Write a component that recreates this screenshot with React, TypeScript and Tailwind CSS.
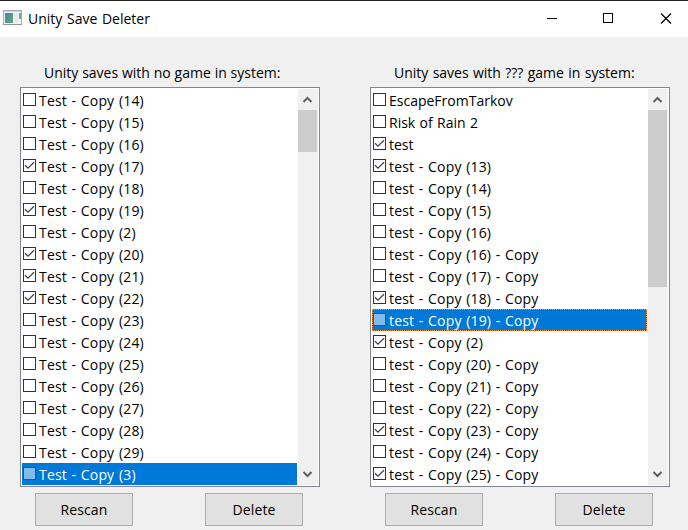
type Item = { name: string; checked?: boolean; selected?: boolean; focused?: boolean };

const noGame: Item[] = [
  { name: 'Test - Copy (14)' },
  { name: 'Test - Copy (15)' },
  { name: 'Test - Copy (16)' },
  { name: 'Test - Copy (17)', checked: true },
  { name: 'Test - Copy (18)' },
  { name: 'Test - Copy (19)', checked: true },
  { name: 'Test - Copy (2)' },
  { name: 'Test - Copy (20)', checked: true },
  { name: 'Test - Copy (21)', checked: true },
  { name: 'Test - Copy (22)', checked: true },
  { name: 'Test - Copy (23)' },
  { name: 'Test - Copy (24)' },
  { name: 'Test - Copy (25)' },
  { name: 'Test - Copy (26)' },
  { name: 'Test - Copy (27)' },
  { name: 'Test - Copy (28)' },
  { name: 'Test - Copy (29)' },
  { name: 'Test - Copy (3)', selected: true },
];

const unknownGame: Item[] = [
  { name: 'EscapeFromTarkov' },
  { name: 'Risk of Rain 2' },
  { name: 'test', checked: true },
  { name: 'test - Copy (13)', checked: true },
  { name: 'test - Copy (14)' },
  { name: 'test - Copy (15)' },
  { name: 'test - Copy (16)' },
  { name: 'test - Copy (16) - Copy' },
  { name: 'test - Copy (17) - Copy' },
  { name: 'test - Copy (18) - Copy', checked: true },
  { name: 'test - Copy (19) - Copy', selected: true, focused: true },
  { name: 'test - Copy (2)', checked: true },
  { name: 'test - Copy (20) - Copy' },
  { name: 'test - Copy (21) - Copy' },
  { name: 'test - Copy (22) - Copy' },
  { name: 'test - Copy (23) - Copy', checked: true },
  { name: 'test - Copy (24) - Copy' },
  { name: 'test - Copy (25) - Copy', checked: true },
];

function Checkbox({ item }: { item: Item }) {
  const look = item.selected ? 'border-[#1d5a92] bg-[#80bbeb]' : 'border-[#333] bg-white';
  return (
    <span className={`mt-1 block size-[13px] shrink-0 border ${look}`}>
      {item.checked && (
        <svg width="11" height="11" viewBox="0 0 11 11" fill="none" stroke="#444" strokeWidth="1.3">
          <path d="M1 5.2 4 8.2 10 2.2" />
        </svg>
      )}
    </span>
  );
}

function Row({ item }: { item: Item }) {
  const spacing = item.name.includes(' - ') ? 'tracking-[0.17px] [word-spacing:0.8px]' : '[word-spacing:0.7px]';
  return (
    <li
      className={`flex h-[22px] border border-dotted ${item.selected ? 'bg-[#0078d7] text-white' : ''} ${
        item.focused ? 'border-[#ff8728]' : 'border-transparent'
      }`}
    >
      <span className="-mt-px flex">
        <Checkbox item={item} />
      </span>
      <span className={`ml-[3px] whitespace-pre leading-[21px] ${spacing}`}>{item.name}</span>
    </li>
  );
}

function Arrow({ down }: { down?: boolean }) {
  return (
    <svg width="20" height="21" viewBox="0 0 20 21" fill="none" stroke="#606060" strokeWidth="2" className="shrink-0">
      <path d={down ? 'M5.5 8 9.5 12 13.5 8' : 'M5.5 13 9.5 9 13.5 13'} />
    </svg>
  );
}

function Panel({ title, titleClass, items, thumbClass }: { title: string; titleClass: string; items: Item[]; thumbClass: string }) {
  return (
    <section className="w-[300px]">
      <h2 className={`h-[50px] whitespace-pre pt-[25px] pl-6 leading-[22px] ${titleClass}`}>{title}</h2>
      <div className="flex h-[400px] justify-between border border-[#828790] bg-white p-px">
        <ul className="w-[275px]">
          {items.map((item) => (
            <Row key={item.name} item={item} />
          ))}
        </ul>
        <div className="flex w-5 flex-col bg-[#f0f0f0]">
          <Arrow />
          <div className={`w-[19px] bg-[#cdcdcd] ${thumbClass}`} />
          <div className="grow" />
          <Arrow down />
        </div>
      </div>
      <div className="mt-1.5 flex gap-[72px] pl-[15px] tracking-[0.1px]">
        <button className="h-[33px] w-[98px] border border-[#adadad] bg-[#e1e1e1]">Rescan</button>
        <button className="h-[33px] w-[98px] border border-[#adadad] bg-[#e1e1e1]">Delete</button>
      </div>
    </section>
  );
}

function AppIcon() {
  return (
    <svg width="19" height="16" viewBox="0 0 19 16" className="-mt-0.5">
      <defs>
        <linearGradient id="screen" x1="0" y1="0" x2="1" y2="1">
          <stop offset="0" stopColor="#477fa5" />
          <stop offset="1" stopColor="#63ad72" />
        </linearGradient>
      </defs>
      <rect x="0.5" y="0.5" width="18" height="14" fill="#f4f6f8" stroke="#a5abb2" />
      <path d="M1 1.5H18" stroke="#d0d4da" />
      <rect x="2" y="3" width="8" height="10" fill="url(#screen)" />
      <rect x="11" y="3" width="4" height="10" fill="#e5eaf0" />
      <rect x="16" y="3" width="2" height="6" fill="#65a992" />
      <path d="M0 14.5H19" stroke="#8f959c" />
    </svg>
  );
}

export default function App() {
  return (
    <div className="h-[530px] w-[688px] overflow-hidden bg-[#f0f0f0] font-['Open_Sans',sans-serif] text-[14px] text-black">
      <header className="flex h-[37px] items-center border-t border-[#222] bg-white pl-[3px]">
        <AppIcon />
        <h1 className="-mt-0.5 ml-1.5 grow whitespace-pre [word-spacing:1px]">Unity Save Deleter</h1>
        <svg width="141" height="36" viewBox="0 0 141 36" fill="none" stroke="#000" shapeRendering="crispEdges">
          <path d="M0 17.5h10" />
          <path d="M56.5 12.5h9v9h-9z" />
          <path d="M114 12.5l10 10M124 12.5l-10 10" strokeWidth="1.3" shapeRendering="auto" />
        </svg>
      </header>
      <main className="flex gap-[50px] pl-5">
        <Panel
          title="Unity saves with no game in system:"
          titleClass="[word-spacing:0.2px]"
          items={noGame}
          thumbClass="h-[42px]"
        />
        <Panel
          title="Unity saves with ??? game in system:"
          titleClass="[word-spacing:0.7px]"
          items={unknownGame}
          thumbClass="h-[177px]"
        />
      </main>
    </div>
  );
}
